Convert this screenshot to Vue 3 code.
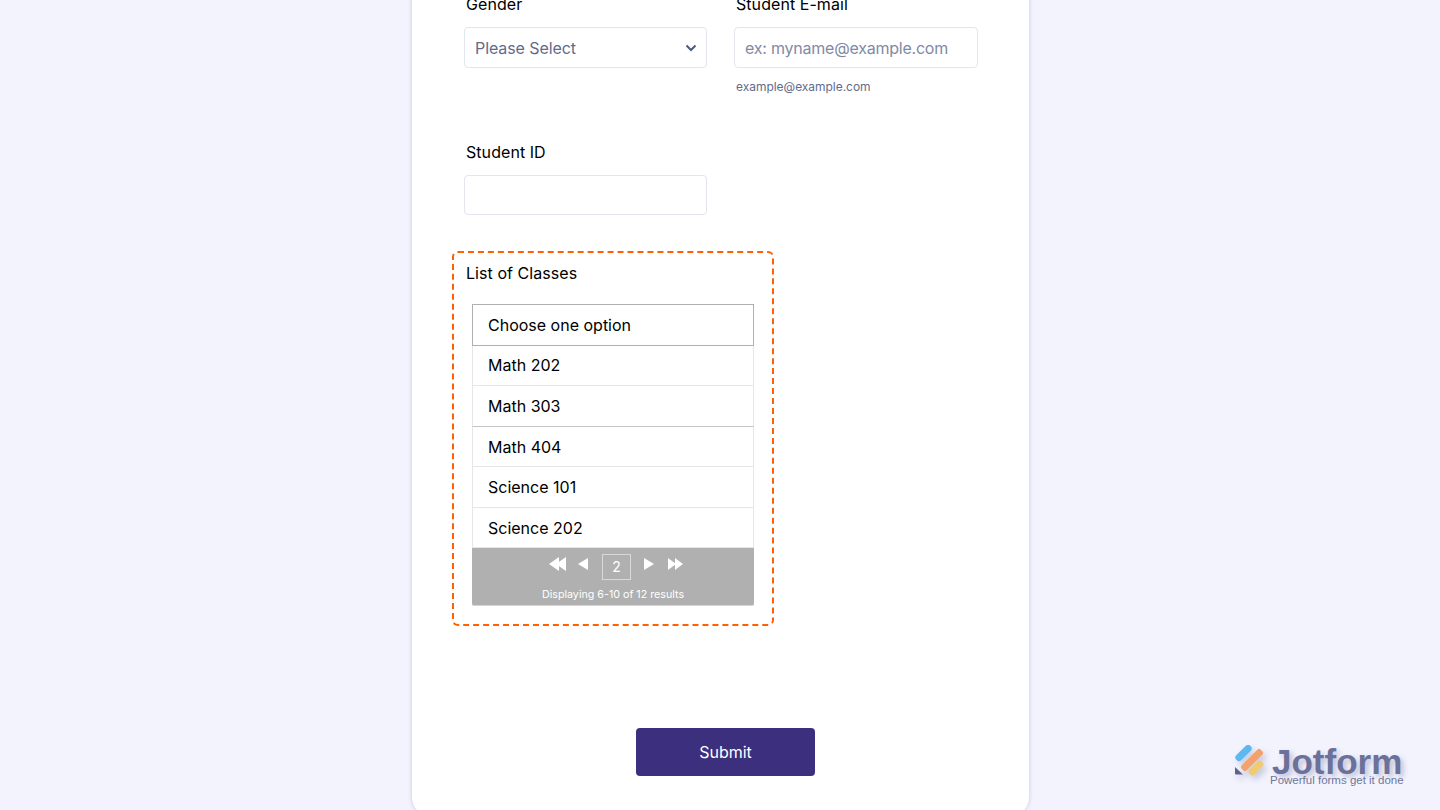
<template>
  <div class="page">
    <form class="card" @submit.prevent>
      <div class="row">
        <div class="field">
          <label class="label">Gender</label>
          <div class="select">
            <span>Please Select</span>
            <svg width="12" height="8" viewBox="0 0 12 8"><path d="M1.500 1.500 6 6l4.500-4.500" fill="none" stroke="#4c5a7d" stroke-width="2"/></svg>
          </div>
        </div>
        <div class="field">
          <label class="label">Student E-mail</label>
          <div class="input placeholder">ex: myname@example.com</div>
          <div class="help">example@example.com</div>
        </div>
      </div>

      <div class="field student">
        <label class="label">Student ID</label>
        <div class="input short"></div>
      </div>

      <div class="classes">
        <label class="label">List of Classes</label>
        <div class="list">
          <div class="option head">Choose one option</div>
          <div v-for="(c, i) in classes" :key="c" class="option" :class="{ darker: i === 1 }">{{ c }}</div>
          <div class="pager">
            <div class="pager-btns">
              <svg width="17" height="14" viewBox="0 0 17 14"><path d="M10 0v14L0 7zM17 0v14L7 7z" fill="#fff"/></svg>
              <svg class="gap-l" width="10" height="12" viewBox="0 0 10 12"><path d="M10 0v12L0 6z" fill="#fff"/></svg>
              <span class="page-no">2</span>
              <svg class="gap-r" width="10" height="12" viewBox="0 0 10 12"><path d="M0 0v12l10-6z" fill="#fff"/></svg>
              <svg width="15" height="12" viewBox="0 0 15 12"><path d="M0 0v12l8-6zM7 0v12l8-6z" fill="#fff"/></svg>
            </div>
            <div class="results">Displaying 6-10 of 12 results</div>
          </div>
        </div>
      </div>

      <div class="actions">
        <button class="submit" type="submit">Submit</button>
      </div>
    </form>

    <div class="brand">
      <svg class="brand-icon" width="30" height="31" viewBox="0 0 30 31">
        <rect x="-10" y="-3.500" width="20" height="7" rx="3.500" transform="translate(8.500 8) rotate(-45)" fill="#5db8f2"/>
        <rect x="-13.500" y="-3.500" width="27" height="7" rx="2.500" transform="translate(17 15) rotate(-45)" fill="#f4a26b"/>
        <rect x="-8.500" y="-3.500" width="17" height="7" rx="2.500" transform="translate(21 23) rotate(-45)" fill="#f2cb6e"/>
        <path d="M0 22 8 29.500H1Q0 29.500 0 28.500z" fill="#5c6488"/>
      </svg>
      <div class="brand-text">
        <div class="brand-name">Jotform</div>
        <div class="brand-sub">Powerful forms get it done</div>
      </div>
    </div>
  </div>
</template>

<script setup>
const classes = ['Math 202', 'Math 303', 'Math 404', 'Science 101', 'Science 202']
</script>

<style>
html, body {
  margin: 0;
  background: #f3f3fe;
}
</style>

<style scoped>
.page {
  position: relative;
  height: 810px;
  overflow: hidden;
  background: #f3f3fe;
  font-family: Inter, "Liberation Sans", sans-serif;
}
.card {
  box-sizing: border-box;
  width: 617px;
  height: 837px;
  margin: -20px 0 0 412px;
  padding: 14px 51px 0 52px;
  background: #fff;
  border-radius: 20px;
  box-shadow: 0 0 4px rgba(87, 95, 140, 0.28);
}
.row {
  display: flex;
  gap: 27px;
}
.field {
  width: 243px;
}
.row .field:last-child {
  width: 244px;
}
.label {
  display: block;
  padding-left: 2px;
  font-size: 16px;
  line-height: 20px;
  font-weight: 400;
  letter-spacing: 0.060px;
  color: #000;
}
.select, .input {
  box-sizing: border-box;
  height: 41px;
  margin-top: 13px;
  padding: 0 9px 0 10px;
  border: 1px solid #e3e5f0;
  border-radius: 4px;
  background: #fff;
  display: flex;
  align-items: center;
  justify-content: space-between;
  font-size: 16px;
  letter-spacing: -0.080px;
  color: #5f6b8c;
}
.placeholder {
  color: #7f8aa6;
  letter-spacing: -0.220px;
}
.help {
  margin-top: 11px;
  padding-left: 2px;
  font-size: 12px;
  line-height: 16px;
  letter-spacing: -0.030px;
  color: #5f6b8c;
}
.student {
  margin-top: 47px;
}
.input.short {
  height: 40px;
}
.classes {
  box-sizing: border-box;
  width: 322px;
  height: 375px;
  margin: 36px 0 0 -12px;
  padding: 10px 19px 0 14px;
  border: 2px dashed #ff6100;
  border-radius: 6px;
}
.classes .label {
  margin-left: -4px;
}
.list {
  width: 282px;
  margin: 21px 0 0 4px;
}
.option {
  box-sizing: border-box;
  height: 40.500px;
  display: flex;
  align-items: center;
  padding-left: 15px;
  border: 1px solid #e6e6e6;
  border-top: 0;
  font-size: 16px;
  color: #000;
}
.option.head {
  height: 41.750px;
  border: 1px solid #b0b0b0;
}
.option.head + .option {
  padding-bottom: 1px;
}
.option.darker {
  border-bottom-color: #c4c4c4;
}
.pager {
  height: 58px;
  background: #b0b0b0;
  border-bottom: 1px solid #d4d4d4;
  box-sizing: border-box;
  border-radius: 0 0 2px 2px;
  color: #fff;
  text-align: center;
}
.pager-btns {
  display: flex;
  justify-content: center;
  align-items: flex-start;
  height: 26px;
  padding-top: 6px;
  margin-left: 6px;
}
.pager-btns svg {
  margin-top: 3px;
}
.pager-btns .gap-l {
  margin: 4px 14px 0 12px;
}
.pager-btns .gap-r {
  margin: 4px 14px 0 13px;
}
.pager-btns svg:last-child {
  margin-top: 4px;
}
.page-no {
  box-sizing: border-box;
  width: 29px;
  height: 26px;
  line-height: 23px;
  border: 1px solid #d9d9d9;
  font-size: 14px;
}
.results {
  font-size: 10.700px;
  line-height: 14px;
  margin-top: 8px;
}
.actions {
  display: flex;
  justify-content: center;
  margin-top: 102px;
  padding-left: 9px;
}
.submit {
  width: 179px;
  height: 48px;
  border: 0;
  border-radius: 4px;
  background: #3b2f7e;
  color: #fff;
  font-family: inherit;
  font-size: 16px;
  font-weight: 400;
}
.brand {
  position: absolute;
  left: 1235px;
  top: 745px;
  display: flex;
}
.brand-icon {
  filter: drop-shadow(3px 4px 3px rgba(90, 98, 140, 0.3));
}
.brand-text {
  margin-left: 5px;
  padding-top: 3px;
}
.brand-name {
  font-family: "Liberation Sans", sans-serif;
  font-size: 35px;
  line-height: 28px;
  font-weight: 700;
  color: #6b7199;
  text-shadow: 3px 3px 5px rgba(90, 98, 140, 0.35);
  margin-left: 2px;
}
.brand-sub {
  font-family: "Liberation Sans", sans-serif;
  font-size: 11.500px;
  line-height: 8px;
  color: #6f7699;
  white-space: nowrap;
}
</style>
